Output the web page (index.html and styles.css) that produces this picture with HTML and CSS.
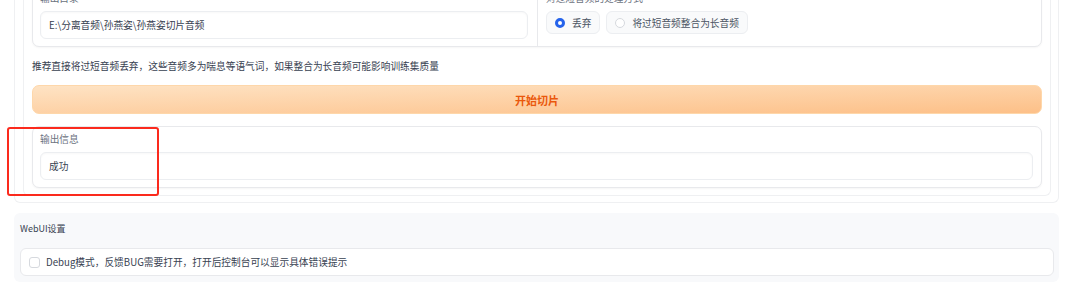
FILE: index.html
```html
<!DOCTYPE html>
<html lang="zh-CN">
<head>
  <meta charset="UTF-8" />
  <title>音频切片</title>
  <link rel="stylesheet" href="styles.css">
</head>
<body>

  <div class="tab">
    <div class="group">

      <div class="card split">
        <div class="col">
          <span class="label">输出目录</span>
          <div class="textbox">E:\分离音频\孙燕姿\孙燕姿切片音频</div>
        </div>
        <div class="col divided">
          <span class="label">对过短音频的处理方式</span>
          <div class="radios">
            <label class="radio checked"><span class="dot"></span>丢弃</label>
            <label class="radio"><span class="dot"></span>将过短音频整合为长音频</label>
          </div>
        </div>
      </div>

      <p class="note">推荐直接将过短音频丢弃，这些音频多为喘息等语气词，如果整合为长音频可能影响训练集质量</p>

      <button class="primary">开始切片</button>

      <div class="card output">
        <span class="label">输出信息</span>
        <div class="textbox">成功</div>
        <!-- red box drawn over the output block -->
        <div class="highlight"></div>
      </div>

    </div>
  </div>

  <div class="settings">
    <div class="settings-title">WebUI设置</div>
    <label class="check-card"><span class="box"></span>Debug模式，反馈BUG需要打开，打开后控制台可以显示具体错误提示</label>
  </div>

</body>
</html>
```

FILE: styles.css
```css
body {
  margin: 0;
  background: #ffffff;
  font-family: "Noto Sans CJK SC", "Noto Sans", sans-serif;
  font-size: 9.7px;
  color: #374151;
}

/* outer tab + inner group borders */
.tab {
  margin: -35px 21px 0 14px;
  padding: 0 7px 6px 8px;
  border: 1px solid #eff0f2;
  border-top: none;
  border-radius: 0 0 6px 6px;
}
.group {
  display: flex;
  flex-direction: column;
  gap: 12px;
  padding: 20px 8px 7px 8px;
  border: 1px solid #eff0f2;
  border-top: none;
  border-radius: 0 0 6px 6px;
}

.card {
  background: #ffffff;
  border: 1px solid #e8e9ec;
  border-radius: 7px;
  box-shadow: 0 1px 2px rgba(0, 0, 0, 0.04);
}
.split {
  display: grid;
  grid-template-columns: 1fr 1fr;
}
.col {
  display: flex;
  flex-direction: column;
  gap: 7px;
  padding: 6px 9px 7px 7px;
}
.col.divided {
  border-left: 1px solid #e8e9ec;
  padding-left: 8px;
}

.label {
  display: block;
  line-height: 12px;
  color: #6b7280;
}

.textbox {
  height: 28px;
  box-sizing: border-box;
  padding: 0 8px;
  display: flex;
  align-items: center;
  border: 1px solid #eceef1;
  border-radius: 6px;
  box-shadow: inset 0 1px 2px rgba(0, 0, 0, 0.03);
  color: #374151;
}

.radios {
  display: flex;
  gap: 6px;
}
.radio {
  height: 23px;
  box-sizing: border-box;
  display: flex;
  align-items: center;
  gap: 7px;
  padding: 0 8px 0 8px;
  background: #f9fafb;
  border: 1px solid #eceef1;
  border-radius: 6px;
  color: #4b5563;
}
.dot {
  width: 10px;
  height: 10px;
  box-sizing: border-box;
  border-radius: 50%;
  border: 1px solid #d6d9de;
  background: #ffffff;
}
.radio.checked .dot {
  border: 3px solid #2563eb;
  background: #ffffff;
}

.note {
  margin: 0;
  line-height: 14px;
  color: #374151;
}

.primary {
  height: 29px;
  font-family: inherit;
  font-size: 11px;
  font-weight: bold;
  color: #ea580c;
  background: linear-gradient(to bottom right, #fee3c4, #fdc088);
  border: 1px solid #fed7aa;
  border-radius: 7px;
}

.output {
  position: relative;
  padding: 6px 8px 7px 7px;
  display: flex;
  flex-direction: column;
  gap: 7px;
}
.highlight {
  position: absolute;
  left: -26px;
  top: 0;
  width: 152px;
  height: 69px;
  box-sizing: border-box;
  border: 2px solid #fb2a1d;
  border-radius: 3px;
}

/* WebUI settings block */
.settings {
  margin: 10px 21px 0 14px;
  padding: 10px 5px 6px 6px;
  background: #f8f9fb;
  border-radius: 6px;
  display: flex;
  flex-direction: column;
  gap: 13px;
}
.settings-title {
  line-height: 12px;
  font-size: 9px;
  color: #374151;
}
.check-card {
  height: 28px;
  box-sizing: border-box;
  display: flex;
  align-items: center;
  gap: 6px;
  padding: 0 8px;
  background: #ffffff;
  border: 1px solid #e8e9ec;
  border-radius: 6px;
  color: #374151;
}
.box {
  width: 11px;
  height: 11px;
  box-sizing: border-box;
  border: 1px solid #d6d9de;
  border-radius: 3px;
  background: #ffffff;
}
```
